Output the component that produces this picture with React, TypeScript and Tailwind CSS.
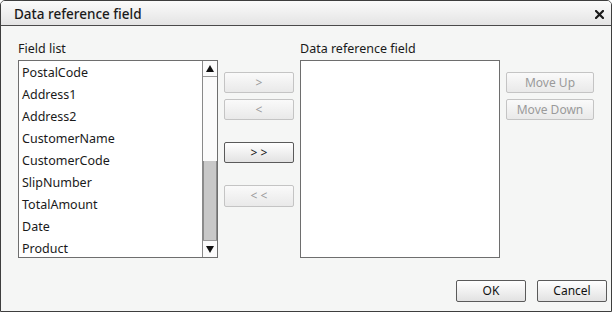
const FIELDS = [
  "PostalCode",
  "Address1",
  "Address2",
  "CustomerName",
  "CustomerCode",
  "SlipNumber",
  "TotalAmount",
  "Date",
  "Product",
];

const font = { fontFamily: '"Noto Sans", "Open Sans", sans-serif' };

function Btn({ label, disabled, className = "" }: { label: string; disabled?: boolean; className?: string }) {
  return (
    <button
      className={`flex items-center justify-center rounded-[2px] border text-[12px] leading-none ${
        disabled
          ? "border-[#c4c4c4] bg-gradient-to-b from-[#fafafa] to-[#e9e9e9] text-[#9a9a9a]"
          : "border-[#5a5a5a] bg-gradient-to-b from-[#ffffff] to-[#e2e2e2] text-[#111]"
      } ${className}`}
    >
      {label}
    </button>
  );
}

export default function App() {
  return (
    <div className="w-[612px] h-[312px] bg-white" style={font}>
      <div className="w-[612px] h-[312px] flex flex-col border border-[#3e3e3e] rounded-t-[5px] bg-[#f5f6f5] overflow-hidden">
        {/* Title bar */}
        <div className="h-[25px] shrink-0 flex items-center justify-between pl-[13px] pr-[7px] border-b border-[#4a4a4a] bg-gradient-to-b from-[#fbfbfb] to-[#e4e4e4]">
          <span className="text-[13.5px] font-medium text-[#1a1a1a] mt-[2px]">Data reference field</span>
          <svg width="9" height="9" viewBox="0 0 9 9" className="mt-[3px]">
            <path d="M1 1 L8 8 M8 1 L1 8" stroke="#1a1a1a" strokeWidth="2.2" strokeLinecap="square" />
          </svg>
        </div>

        {/* Body */}
        <div className="flex pt-[11px] pl-[17px]">
          {/* Field list */}
          <div className="w-[200px] shrink-0 flex flex-col">
            <div className="h-[23px] text-[12.5px] leading-[24px] text-[#1a1a1a]">Field list</div>
            <div className="h-[198px] flex border border-[#6e6e6e] bg-white">
              <div className="flex-1 overflow-hidden pt-[1px]">
                {FIELDS.map((f) => (
                  <div key={f} className="h-[22px] pl-[3px] text-[12.5px] leading-[22px] text-[#1a1a1a]">
                    {f}
                  </div>
                ))}
              </div>
              <div className="w-[15px] flex flex-col border-l border-[#8a8a8a] bg-[#fbfbfb]">
                <div className="h-[16px] flex items-center justify-center border-b border-[#9a9a9a]">
                  <svg width="8" height="7" viewBox="0 0 8 7"><path d="M4 0 L8 7 L0 7 Z" fill="#111" /></svg>
                </div>
                <div className="h-[84px]" />
                <div className="flex-1 bg-[#c8c8c8] border-x border-[#8c8c8c]" />
                <div className="h-[17px] flex items-center justify-center border-t border-[#9a9a9a]">
                  <svg width="8" height="7" viewBox="0 0 8 7"><path d="M0 0 L8 0 L4 7 Z" fill="#111" /></svg>
                </div>
              </div>
            </div>
          </div>

          {/* Transfer buttons */}
          <div className="w-[70px] shrink-0 ml-[6px] pt-[35px] flex flex-col">
            <Btn label=">" disabled className="h-[21px]" />
            <Btn label="<" disabled className="h-[21px] mt-[6px]" />
            <Btn label="> >" className="h-[21px] mt-[22px]" />
            <Btn label="< <" disabled className="h-[22px] mt-[22px]" />
          </div>

          {/* Data reference field */}
          <div className="w-[200px] shrink-0 ml-[6px] flex flex-col">
            <div className="h-[23px] text-[12.5px] leading-[24px] text-[#1a1a1a]">Data reference field</div>
            <div className="h-[198px] border border-[#6e6e6e] bg-white" />
          </div>

          {/* Move buttons */}
          <div className="w-[88px] shrink-0 ml-[6px] pt-[35px] flex flex-col">
            <Btn label="Move Up" disabled className="h-[21px] text-[12.5px]" />
            <Btn label="Move Down" disabled className="h-[21px] mt-[6px] text-[12.5px]" />
          </div>
        </div>

        {/* Footer */}
        <div className="flex justify-end gap-[11px] pr-[4px] mt-[22px]">
          <Btn label="OK" className="w-[70px] h-[22px] text-[12.5px]" />
          <Btn label="Cancel" className="w-[70px] h-[22px] text-[12.5px]" />
        </div>
      </div>
    </div>
  );
}
